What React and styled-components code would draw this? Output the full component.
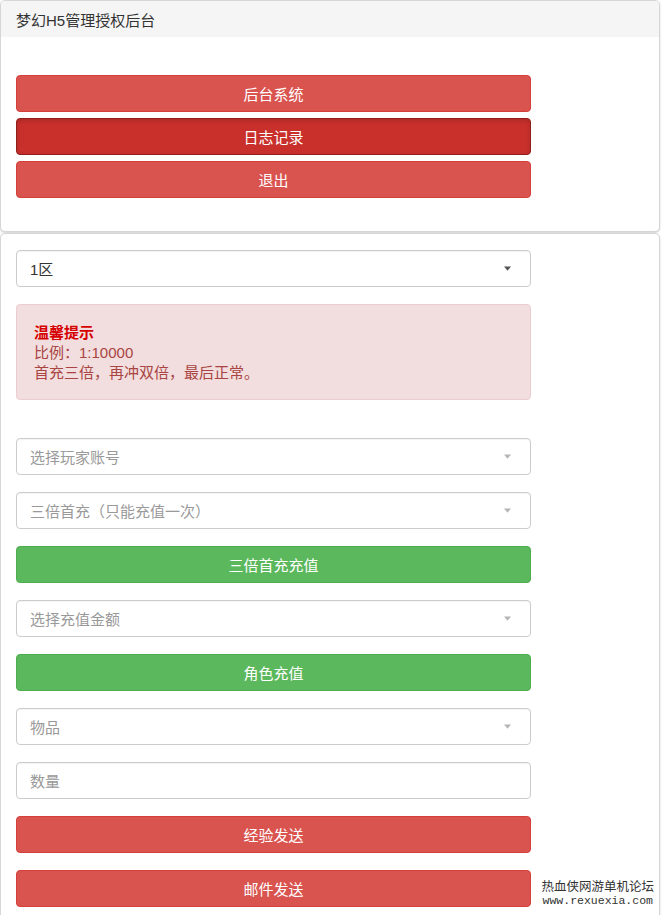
import React from "react";
import styled, { createGlobalStyle } from "styled-components";

const Global = createGlobalStyle`
  html, body {
    margin: 0;
    padding: 0;
    overflow: hidden;
    background: #fff;
  }
  body {
    font-family: "Liberation Sans", "Noto Sans CJK SC", sans-serif;
    font-size: 15px;
    color: #333;
  }
  * { box-sizing: border-box; }
`;

const Page = styled.div`
  position: relative;
  width: 660px;
  display: flex;
  flex-direction: column;
  gap: 1px;
`;

const Panel = styled.section`
  background: #fff;
  border: 1px solid #d6d6d6;
  border-radius: 5px;
  box-shadow: 0 1px 2px rgba(0, 0, 0, 0.18);
  overflow: hidden;
`;

const Heading = styled.div`
  height: 36px;
  background: #f5f5f5;
  padding: 0 15px;
  display: flex;
  align-items: center;
  font-size: 15px;
  color: #333;
`;

const Body = styled.div`
  padding: ${(p) => p.$pad};
  display: flex;
  flex-direction: column;
  gap: ${(p) => p.$gap}px;
  width: 545px;
`;

const colors = {
  danger: { bg: "#d9534f", border: "#d43f3a" },
  active: { bg: "#c9302c", border: "#8e1f1c" },
  success: { bg: "#5cb85c", border: "#4cae4c" },
};

const Button = styled.button`
  width: 515px;
  height: 37px;
  border-radius: 4px;
  border: 1px solid ${(p) => colors[p.$tone].border};
  background: ${(p) => colors[p.$tone].bg};
  color: #fff;
  font-family: inherit;
  font-size: 15px;
  padding: 0;
  display: flex;
  align-items: center;
  justify-content: center;
  box-shadow: ${(p) => (p.$tone === "active" ? "inset 0 2px 4px rgba(0,0,0,0.15)" : "none")};
`;

const Field = styled.div`
  width: 515px;
  height: 37px;
  border: 1px solid #ccc;
  border-radius: 4px;
  background: #fff;
  display: flex;
  align-items: center;
  padding: 0 13px;
  font-size: 15px;
  color: ${(p) => (p.$muted ? "#999" : "#333")};
  box-shadow: inset 0 1px 1px rgba(0, 0, 0, 0.05);
`;

const FieldText = styled.span`
  flex: 1;
`;

const Caret = styled.svg`
  width: 7px;
  height: 5px;
  margin-right: 6px;
`;

const Alert = styled.div`
  width: 515px;
  background: #f2dede;
  border: 1px solid #ebccd1;
  border-radius: 4px;
  padding: 18px 17px 16px;
  color: #a94442;
  font-size: 15px;
  line-height: 20px;
  margin-bottom: 21px;
`;

const AlertTitle = styled.div`
  color: #d60000;
  font-weight: bold;
`;

const Watermark = styled.div`
  position: absolute;
  right: 6px;
  top: 880px;
  display: flex;
  flex-direction: column;
  align-items: center;
  color: #333;
  text-shadow: 0 0 2px #fff, 0 0 2px #fff;
  line-height: 1;
`;

const MarkTitle = styled.span`
  font-size: 12.5px;
  font-family: "Noto Sans CJK SC", sans-serif;
`;

const MarkUrl = styled.span`
  font-size: 11.5px;
  font-family: "Liberation Mono", monospace;
  margin-top: 2px;
`;

function Select({ value, muted }) {
  return (
    <Field $muted={muted}>
      <FieldText>{value}</FieldText>
      <Caret viewBox="0 0 7 5">
        <path d="M0 0.5 H7 L3.5 4.8 Z" fill={muted ? "#b5b5b5" : "#555"} />
      </Caret>
    </Field>
  );
}

export default function App() {
  return (
    <>
      <Global />
      <Page>
        <Panel>
          <Heading>梦幻H5管理授权后台</Heading>
          <Body $pad="38px 15px 33px" $gap={6}>
            <Button $tone="danger">后台系统</Button>
            <Button $tone="active">日志记录</Button>
            <Button $tone="danger">退出</Button>
          </Body>
        </Panel>
        <Panel>
          <Body $pad="16px 15px 20px" $gap={17}>
            <Select value="1区" />
            <Alert>
              <AlertTitle>温馨提示</AlertTitle>
              <div>比例：1:10000</div>
              <div>首充三倍，再冲双倍，最后正常。</div>
            </Alert>
            <Select value="选择玩家账号" muted />
            <Select value="三倍首充（只能充值一次）" muted />
            <Button $tone="success">三倍首充充值</Button>
            <Select value="选择充值金额" muted />
            <Button $tone="success">角色充值</Button>
            <Select value="物品" muted />
            <Field $muted>数量</Field>
            <Button $tone="danger">经验发送</Button>
            <Button $tone="danger">邮件发送</Button>
          </Body>
        </Panel>
        <Watermark>
          <MarkTitle>热血侠网游单机论坛</MarkTitle>
          <MarkUrl>www.rexuexia.com</MarkUrl>
        </Watermark>
      </Page>
    </>
  );
}
